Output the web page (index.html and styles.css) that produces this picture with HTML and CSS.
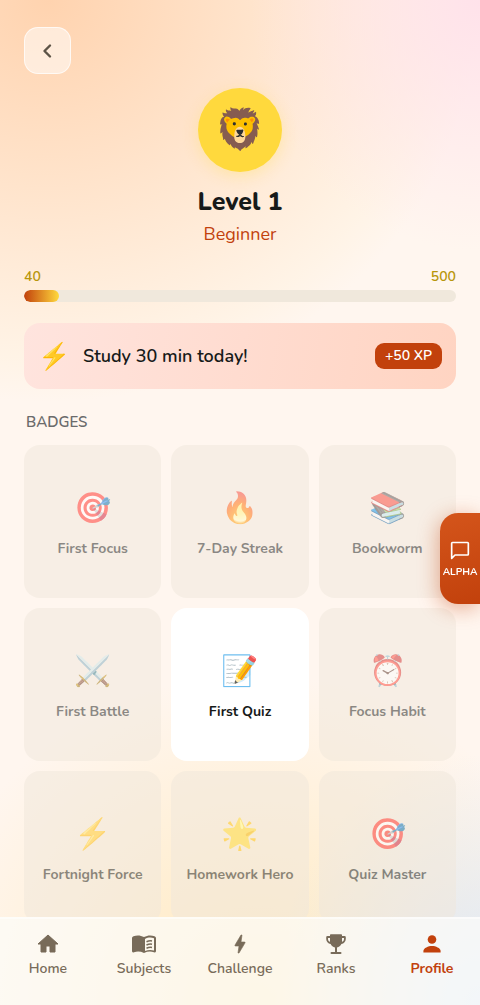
FILE: index.html
```html
<!DOCTYPE html>
<html lang="en">
<head>
    <meta charset="UTF-8">
    <meta name="viewport" content="width=device-width, initial-scale=1.0">
    <title>Profile</title>
    <link rel="stylesheet" href="styles.css">
</head>
<body>
    <main class="screen">
        <button class="back" type="button" aria-label="Back">
            <svg width="24" height="24" viewBox="0 0 24 24" fill="none" stroke="currentColor" stroke-width="2.4" stroke-linecap="round" stroke-linejoin="round"><path d="M14 6.500L8.500 12l5.500 5.500"/></svg>
        </button>

        <!-- Level -->
        <section class="level">
            <div class="avatar">🦁</div>
            <h1 class="level-title">Level 1</h1>
            <p class="level-rank">Beginner</p>
        </section>

        <section class="progress">
            <div class="progress-labels"><span>40</span><span>500</span></div>
            <div class="progress-track"><div class="progress-fill" style="width: 8%"></div></div>
        </section>

        <section class="quest">
            <span class="quest-icon">⚡</span>
            <span class="quest-text">Study 30 min today!</span>
            <span class="quest-xp">+50 XP</span>
        </section>

        <!-- Badges -->
        <h2 class="section-title">BADGES</h2>
        <ul class="badges">
            <li class="badge"><span class="badge-icon">🎯</span><span class="badge-name">First Focus</span></li>
            <li class="badge"><span class="badge-icon">🔥</span><span class="badge-name">7-Day Streak</span></li>
            <li class="badge"><span class="badge-icon">📚</span><span class="badge-name">Bookworm</span></li>
            <li class="badge"><span class="badge-icon">⚔️</span><span class="badge-name">First Battle</span></li>
            <li class="badge earned"><span class="badge-icon">📝</span><span class="badge-name">First Quiz</span></li>
            <li class="badge"><span class="badge-icon">⏰</span><span class="badge-name">Focus Habit</span></li>
            <li class="badge"><span class="badge-icon">⚡</span><span class="badge-name">Fortnight Force</span></li>
            <li class="badge"><span class="badge-icon">🌟</span><span class="badge-name">Homework Hero</span></li>
            <li class="badge"><span class="badge-icon">🎯</span><span class="badge-name">Quiz Master</span></li>
        </ul>
    </main>

    <button class="feedback" type="button">
        <svg width="20" height="20" viewBox="0 0 24 24" fill="none" stroke="currentColor" stroke-width="2"><path d="M2 22V4q0-1 1-1h18q1 0 1 1v13q0 1-1 1H6z" stroke-linejoin="round"/></svg>
        <span>ALPHA</span>
    </button>

    <nav class="tabs">
        <a class="tab" href="#home">
            <svg viewBox="0 0 24 24"><path d="M10 20v-6h4v6h5v-8h3L12 3 2 12h3v8z" stroke="currentColor" stroke-linejoin="round"/></svg>
            <span>Home</span>
        </a>
        <a class="tab" href="#subjects">
            <svg viewBox="0 0 24 24"><path d="M12 5C8.500 3 4.500 3 1.500 4.200Q0 4.800 0 6v13q0 2 2 1.200 5-1.700 10 .8 5-2.500 10-.8 2 .8 2-1.200V6q0-1.200-1.500-1.800C19.500 3 15.500 3 12 5zm1 2c3-1.800 6-1.800 9-.8v12.300c-3-.9-6-.7-9 .6z" fill-rule="evenodd"/><path d="M14.500 9.800q3-1.400 5.500-.8M14.500 13q3-1.400 5.500-.8M14.500 16.200q3-1.400 5.500-.8" fill="none" stroke="currentColor" stroke-width="1.500"/></svg>
            <span>Subjects</span>
        </a>
        <a class="tab" href="#challenge">
            <svg viewBox="0 0 24 24"><path d="M11 21h-1l1-7H7.500c-.9 0-.6-.7-.3-1.200L13 3h1l-1 7h3.500c.5 0 .8.300.4 1.100z" stroke="currentColor" stroke-width=".6"/></svg>
            <span>Challenge</span>
        </a>
        <a class="tab" href="#ranks">
            <svg viewBox="0 0 24 24"><path d="M20.500 4H18V3q0-.8-.8-.8H6.800Q6 2.200 6 3v1H3.500Q2.200 4 2.200 5.300V7c0 2.600 1.900 4.700 4.400 5 .8 1.700 2.500 3 4.400 3.500V20H7.500q-1 0-1 1t1 1h9q1 0 1-1t-1-1H13v-4.500c1.900-.5 3.600-1.800 4.400-3.500 2.500-.3 4.400-2.400 4.400-5V5.300Q21.800 4 20.500 4zM4 7V6h2v3.800C4.700 9.400 4 8.400 4 7zm16 0c0 1.400-.7 2.400-2 2.800V6h2z" fill-rule="evenodd"/></svg>
            <span>Ranks</span>
        </a>
        <a class="tab active" href="#profile" aria-current="page">
            <svg viewBox="0 0 24 24"><circle cx="12" cy="7.500" r="4.300"/><path d="M3.400 20.500v-1.500c0-3 5-5 8.600-5s8.600 2 8.600 5v1.500z"/></svg>
            <span>Profile</span>
        </a>
    </nav>
</body>
</html>
```
FILE: styles.css
```css
* {
    box-sizing: border-box;
}
body {
    margin: 0;
    height: 100vh;
    display: flex;
    flex-direction: column;
    font-family: Nunito, "Noto Sans", sans-serif;
    color: #171a19;
    background:
        radial-gradient(ellipse 48% 25% at 100% 0%, #ffe2ea, rgba(255, 226, 234, 0)),
        radial-gradient(ellipse 90% 40% at 10% 0%, #ffd3af, rgba(255, 240, 218, 0.4) 90%, rgba(255, 243, 228, 0)),
        radial-gradient(ellipse 43% 25% at 100% 100%, #dce8f8, rgba(220, 232, 248, 0)),
        radial-gradient(ellipse 70% 33% at 53% 100%, #ffe9bd, rgba(255, 233, 189, 0)),
        #fff6ef;
}
button {
    font-family: inherit;
    cursor: pointer;
}

.screen {
    flex: 1;
    min-height: 0;
    overflow-y: auto;
    scrollbar-width: none;
    padding: 27px 24px 0;
}
.back {
    display: flex;
    align-items: center;
    justify-content: center;
    width: 47px;
    height: 47px;
    padding: 0;
    border: 1px solid rgba(255, 255, 255, 0.7);
    border-radius: 14px;
    background: rgba(255, 255, 255, 0.5);
    color: #5c5346;
}

/* Level */
.level {
    display: flex;
    flex-direction: column;
    align-items: center;
    margin-top: 14px;
}
.avatar {
    display: flex;
    align-items: center;
    justify-content: center;
    width: 84px;
    height: 84px;
    border-radius: 50%;
    background: #ffd93d;
    box-shadow: 0 4px 16px rgba(255, 217, 61, 0.3);
    font-size: 40px;
}
.level-title {
    margin: 12px 0 0;
    font-size: 25px;
    line-height: 36px;
    font-weight: 800;
}
.level-rank {
    margin: 0;
    font-size: 18px;
    line-height: 28px;
    color: #c2410c;
}

.progress {
    margin-top: 20px;
}
.progress-labels {
    display: flex;
    justify-content: space-between;
    font-size: 14px;
    line-height: 18px;
    font-weight: 600;
    color: #b8960c;
}
.progress-track {
    height: 12px;
    margin-top: 4px;
    border-radius: 6px;
    background: #f0e8dc;
    overflow: hidden;
}
.progress-fill {
    height: 100%;
    border-radius: 6px;
    background: linear-gradient(90deg, #c2410c, #ffd93d);
}

.quest {
    display: flex;
    align-items: center;
    gap: 13px;
    height: 66px;
    margin-top: 21px;
    padding: 0 14px;
    border-radius: 16px;
    background: linear-gradient(100deg, #ffe4de, #ffd4c2);
}
.quest-icon {
    width: 32px;
    font-size: 26px;
    text-align: center;
}
.quest-text {
    flex: 1;
    font-size: 18px;
    font-weight: 600;
}
.quest-xp {
    padding: 0 10px;
    border-radius: 9px;
    background: #c2410c;
    color: #fff;
    font-size: 14px;
    line-height: 26px;
    font-weight: 600;
}

/* Badges */
.section-title {
    margin: 22px 2px 12px;
    font-size: 15px;
    line-height: 22px;
    font-weight: 600;
    color: #6b6b6b;
}
.badges {
    display: grid;
    grid-template-columns: repeat(3, 1fr);
    gap: 10px;
    margin: 0;
    padding: 0 0 24px;
    list-style: none;
}
.badge {
    display: flex;
    flex-direction: column;
    align-items: center;
    justify-content: center;
    gap: 6px;
    height: 153px;
    border-radius: 16px;
    background: #f0e8dc;
    opacity: 0.5;
}
.badge.earned {
    background: #fff;
    opacity: 1;
}
.badge-icon {
    font-size: 30px;
    line-height: 48px;
}
.badge-name {
    font-size: 14px;
    line-height: 20px;
    font-weight: 700;
}

.feedback {
    position: fixed;
    top: 513px;
    right: 0;
    display: flex;
    flex-direction: column;
    align-items: center;
    justify-content: center;
    gap: 4px;
    width: 40px;
    height: 91px;
    padding: 3px 0 0;
    border: 0;
    border-radius: 18px 0 0 18px;
    background: linear-gradient(165deg, #d4551b, #c2410c);
    box-shadow: -2px 4px 20px rgba(194, 65, 12, 0.4);
    color: #fff;
    font-size: 10px;
    line-height: 16px;
    font-weight: 700;
}

/* Bottom navigation */
.tabs {
    display: flex;
    height: 88px;
    padding-top: 13px;
    border-top: 2px solid rgba(255, 255, 255, 0.5);
    background: rgba(252, 252, 250, 0.7);
}
.tab {
    flex: 1;
    display: flex;
    flex-direction: column;
    align-items: center;
    gap: 2px;
    color: #786b59;
    font-size: 14px;
    line-height: 22px;
    font-weight: 600;
    text-decoration: none;
}
.tab svg {
    width: 24px;
    height: 24px;
    fill: currentColor;
}
.tab.active {
    color: #c2410c;
    font-weight: 700;
}
```
